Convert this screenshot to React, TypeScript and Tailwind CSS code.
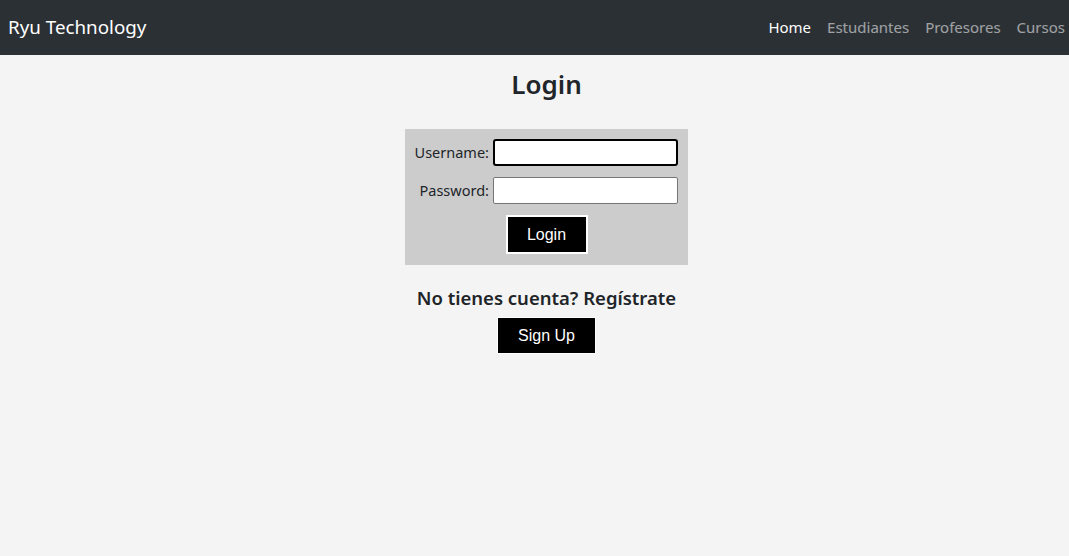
import React from "react";

const sans = "font-['Noto_Sans','Open_Sans',sans-serif]";

export default function App() {
  return (
    <div className={`min-h-[556px] bg-[#f4f4f4] text-[#212529] ${sans}`}>
      <nav className="flex h-[55px] items-center justify-between bg-[#2b3035] pl-2 pr-1">
        <span className="text-[18.8px] text-white">Ryu Technology</span>
        <ul className="flex gap-4 text-[15px]">
          <li className="text-white">Home</li>
          <li className="text-white/55">Estudiantes</li>
          <li className="text-white/55">Profesores</li>
          <li className="text-white/55">Cursos</li>
        </ul>
      </nav>
      <main className="flex flex-col items-center pl-[24px]">
        <h2 className="mt-[12px] text-[26px] font-semibold leading-[34px]">Login</h2>
        <form className="mt-[28px] flex w-[283px] flex-col items-center gap-[11px] bg-[#cccccc] px-[10px] pt-[10px] pb-[11px]">
          <div className="flex w-full items-center justify-end gap-1">
            <label className="text-[14.5px]">Username:</label>
            <input
              type="text"
              className="h-[27px] w-[185px] rounded-[3px] border-2 border-black bg-white"
            />
          </div>
          <div className="flex w-full items-center justify-end gap-1">
            <label className="text-[14.5px]">Password:</label>
            <input
              type="password"
              className="h-[27px] w-[185px] rounded-[2px] border border-[#767676] bg-white"
            />
          </div>
          <button
            type="submit"
            className="h-[39px] w-[82px] border-2 border-white bg-black font-['Liberation_Sans',Arial,sans-serif] text-[16px] text-white"
          >
            Login
          </button>
        </form>
        <h3 className="mt-[20px] text-[18.5px] font-semibold leading-[26px]">No tienes cuenta? Regístrate</h3>
        <button className="mt-[6px] h-[37px] w-[99px] border border-white bg-black font-['Liberation_Sans',Arial,sans-serif] text-[16px] text-white">
          Sign Up
        </button>
      </main>
    </div>
  );
}
